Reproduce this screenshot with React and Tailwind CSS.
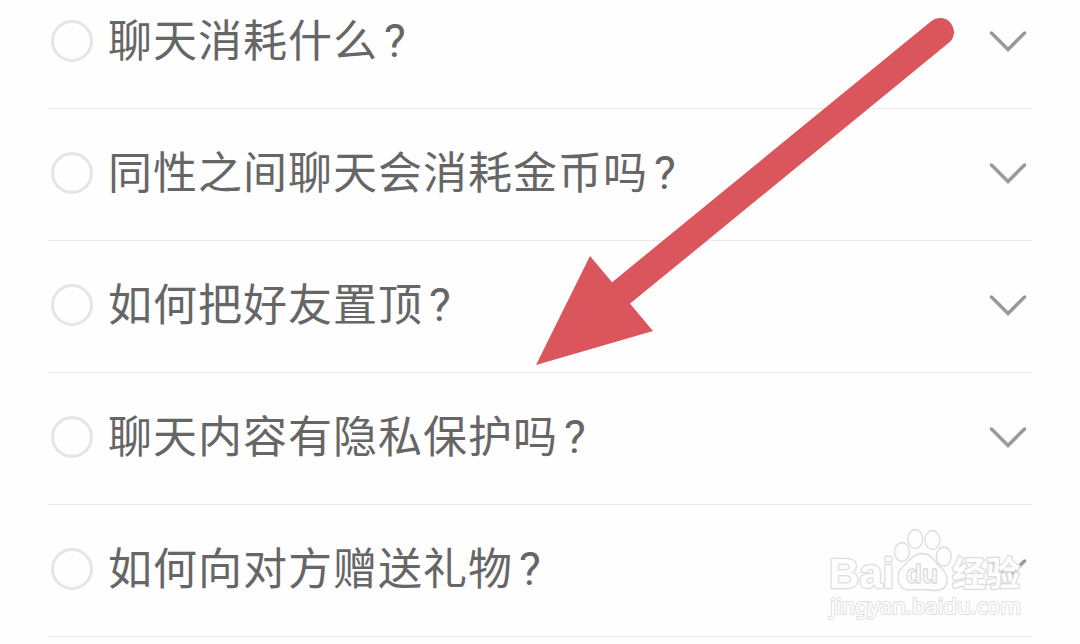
const questions = [
  "聊天消耗什么",
  "同性之间聊天会消耗金币吗",
  "如何把好友置顶",
  "聊天内容有隐私保护吗",
  "如何向对方赠送礼物",
];

function QuestionRow({question}) {
  return (
    <li className="flex h-[132px] items-center border-b border-[#e9e9e9] pr-[5px] pb-[3px] pl-[3px]">
      <span className="size-[42px] shrink-0 rounded-full border-3 border-[#e5e5e5]" />
      <span className="ml-[15px] flex-1 text-[44px] leading-[60px] tracking-[1px] text-[#666]">
        {question}
        <span className="ml-[6px] font-['Roboto'] text-[46px]">?</span>
      </span>
      <svg className="h-[22px] w-[38px]" viewBox="0 0 38 22" fill="none" stroke="#999" strokeWidth="3.4" strokeLinecap="round">
        <path d="M2.5 3L19 19.5L35.5 3" />
      </svg>
    </li>
  );
}

function Arrow() {
  return (
    <svg className="absolute top-0 left-0 h-[644px] w-[1080px]" viewBox="0 0 1080 644">
      <path d="M940 32L621 293" stroke="#da565c" strokeWidth="28" strokeLinecap="round" />
      <path d="M536 365L590 256L653 331Z" fill="#da565c" />
    </svg>
  );
}

function Watermark() {
  return (
    <svg className="absolute top-[520px] left-[820px] h-[110px] w-[220px]" viewBox="0 0 220 110" fill="#fefefe" stroke="#dcdcdc" strokeLinejoin="round">
      <g strokeWidth="1.3">
        <ellipse cx="82" cy="32" rx="7.5" ry="9.5" />
        <ellipse cx="95.3" cy="19" rx="7.5" ry="9.5" />
        <ellipse cx="112.5" cy="20" rx="7.5" ry="9.5" />
        <ellipse cx="123.7" cy="36.5" rx="7.5" ry="9.5" />
        <path d="M102 33.5c-8 0-12 6-15 9-5 5-9 8-9 15 0 8 5 12.5 11 12.5 5 0 8-.5 13-.5s9 1 14 1c7 0 11-4 11-11 0-8-6-11-10-16-3-4-7-10-15-10z" />
      </g>
      <g fontWeight="bold" paintOrder="stroke" strokeWidth="2.5">
        <text x="9" y="67.5" fontSize="43" textLength="65" lengthAdjust="spacingAndGlyphs">Bai</text>
        <text x="132" y="66" fontSize="34">经验</text>
      </g>
      <text x="86" y="63" fontSize="25" fontWeight="bold" textLength="32" lengthAdjust="spacingAndGlyphs" strokeWidth="1.3">du</text>
      <text x="10" y="94" fontFamily="Noto Sans" fontSize="22" textLength="191" lengthAdjust="spacingAndGlyphs" paintOrder="stroke" stroke="#e0e0e0" strokeWidth="2">jingyan.baidu.com</text>
    </svg>
  );
}

export default function App() {
  return (
    <main className="relative h-[644px] w-[1080px] overflow-hidden bg-[#fefefe] font-['Liberation_Sans','Noto_Sans_CJK_SC',sans-serif]">
      <ul className="-mt-[23px] ml-[48px] w-[984px]">
        {questions.map((question) => (
          <QuestionRow key={question} question={question} />
        ))}
      </ul>
      <Arrow />
      <Watermark />
    </main>
  );
}
